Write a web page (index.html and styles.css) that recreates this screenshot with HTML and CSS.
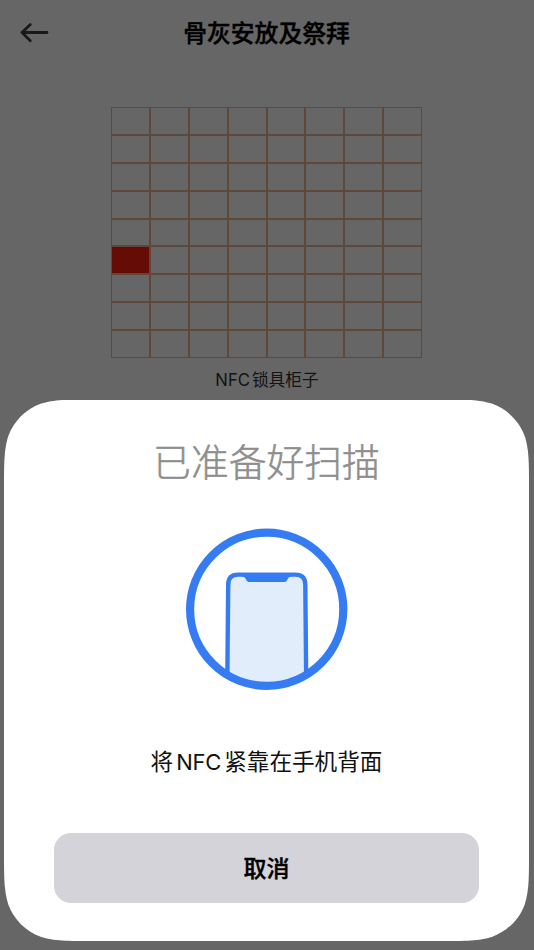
FILE: index.html
```html
<!DOCTYPE html>
<html lang="zh-CN">
	<head>
		<meta charset="utf-8">
		<meta name="viewport" content="width=device-width,initial-scale=1">
		<link rel="stylesheet" href="styles.css">
		<title>骨灰安放及祭拜</title>
		<script type="text/javascript">
			window.onload=function(){
				var grid=document.getElementById("grid");
				var rows=9,cols=8;
				//选中的柜子
				var current=5*cols;
				for(var i=0;i<rows*cols;i++){
					var cell=document.createElement("li");
					cell.className=i===current?"cell active":"cell";
					grid.appendChild(cell);
				}
			}
		</script>
	</head>
	<body>
		<div class="page">
			<div class="header">
				<svg class="back" viewBox="0 0 30 22">
					<path d="M27 10.5H2M10.3 2.6L2 10.5l8.3 8.3" />
				</svg>
				<h1 class="title">骨灰安放及祭拜</h1>
			</div>
			<ul class="grid" id="grid"></ul>
			<p class="label"><span class="en">NFC</span>锁具柜子</p>
		</div>
		<div class="mask">
			<div class="sheet">
				<h2 class="ready">已准备好扫描</h2>
				<svg class="phone" viewBox="0 0 182 180">
					<defs>
						<clipPath id="round"><circle cx="90.7" cy="89.3" r="77" /></clipPath>
					</defs>
					<g clip-path="url(#round)">
						<path class="screen" d="M51.1 180L52.2 64.5Q52.3 54.6 62 54.6H119.5Q129.2 54.6 129.3 64.5L130.4 180Z" />
						<path class="notch" d="M66 53V56.5Q69.2 56.8 69.8 59Q70.6 62.1 74 62.1H107.5Q110.9 62.1 111.7 59Q112.3 56.8 115.5 56.5V53Z" />
					</g>
					<circle class="ring" cx="90.7" cy="89.3" r="76.6" />
				</svg>
				<p class="tip">将<span class="en">NFC</span>紧靠在手机背面</p>
				<button class="cancel">取消</button>
			</div>
		</div>
	</body>
</html>
```
FILE: styles.css
```css
*{
	margin: 0;
	padding: 0;
	box-sizing: border-box;
}
body{
	height: 950px;
	overflow: hidden;
	background-color: #fff;
	font-family: Inter,"Noto Sans CJK SC",sans-serif;
}
li{
	list-style: none;
}
.page{
	height: 950px;
}
.header{
	height: 66px;
	padding: 0 21px 0 20px;
	display: grid;
	grid-template-columns: 30px 1fr 30px;
	align-items: center;
}
.back{
	width: 30px;
	height: 22px;
	fill: none;
	stroke: #404040;
	stroke-width: 2.8;
	stroke-linecap: round;
	stroke-linejoin: round;
}
.title{
	padding-top: 2px;
	text-align: center;
	font-size: 23.8px;
	line-height: 34px;
	font-weight: 500;
	-webkit-text-stroke: 0.4px #000;
	color: #000;
}
.grid{
	width: 311px;
	height: 250.4px;
	margin: 41.3px 0 0 111px;
	display: grid;
	grid-template-columns: repeat(8,1fr);
	grid-template-rows: repeat(9,1fr);
}
.cell{
	border: 1px solid #f0b48c;
}
.cell.active{
	background-color: #ff200f;
}
.label{
	margin-top: 10.3px;
	text-align: center;
	font-size: 16.7px;
	line-height: 24px;
	color: #333;
}
.label .en{
	margin-right: 2px;
}
/*遮罩层*/
.mask{
	position: absolute;
	left: 0;
	top: 0;
	width: 100%;
	height: 950px;
	padding: 399.5px 5px 0 4px;
	background-color: rgba(0,0,0,0.6);
}
/*连续曲率的圆角*/
.sheet{
	height: 541.5px;
	display: flex;
	flex-direction: column;
	align-items: center;
	background-color: #fff;
	clip-path: path("M88.7 0H436.3C461.9 0 474.6 0 488.4 4.3C503.4 9.8 515.2 21.6 520.7 36.6C525 50.4 525 63.1 525 88.7V452.8C525 478.4 525 491.1 520.7 504.9C515.2 519.9 503.4 531.7 488.4 537.2C474.6 541.5 461.9 541.5 436.3 541.5H88.7C63.1 541.5 50.4 541.5 36.6 537.2C21.6 531.7 9.8 519.9 4.3 504.9C0 491.1 0 478.4 0 452.8V88.7C0 63.1 0 50.4 4.3 36.6C9.8 21.6 21.6 9.8 36.6 4.3C50.4 0 63.1 0 88.7 0Z");
}
.ready{
	margin-top: 34px;
	font-size: 37.8px;
	line-height: 56px;
	font-weight: 300;
	-webkit-text-stroke: 0.5px #8e8e8e;
	color: #8e8e8e;
}
.phone{
	width: 182px;
	height: 180px;
	margin-top: 30.5px;
}
.ring{
	fill: none;
	stroke: #357cf3;
	stroke-width: 8.2;
}
.screen{
	fill: #e1edfb;
	stroke: #357cf3;
	stroke-width: 4.4;
}
.notch{
	fill: #357cf3;
}
.tip{
	margin-top: 45px;
	font-size: 22.6px;
	line-height: 34px;
	color: #111;
}
.tip .en{
	margin: 0 3px;
	font-size: 22px;
	letter-spacing: -0.2px;
}
.cancel{
	width: 425px;
	height: 70px;
	margin-top: 54px;
	padding-bottom: 2px;
	border: none;
	border-radius: 17px;
	background-color: #d4d3d9;
	font-family: inherit;
	font-size: 23px;
	font-weight: 500;
	-webkit-text-stroke: 0.4px #000;
	color: #000;
}
```
